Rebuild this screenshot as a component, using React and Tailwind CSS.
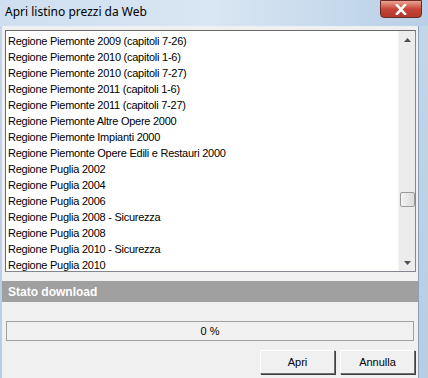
import React from 'react'

const items = [
  'Regione Piemonte 2009 (capitoli 7-26)',
  'Regione Piemonte 2010 (capitoli 1-6)',
  'Regione Piemonte 2010 (capitoli 7-27)',
  'Regione Piemonte 2011 (capitoli 1-6)',
  'Regione Piemonte 2011 (capitoli 7-27)',
  'Regione Piemonte Altre Opere 2000',
  'Regione Piemonte Impianti 2000',
  'Regione Piemonte Opere Edili e Restauri 2000',
  'Regione Puglia 2002',
  'Regione Puglia 2004',
  'Regione Puglia 2006',
  'Regione Puglia 2008 - Sicurezza',
  'Regione Puglia 2008',
  'Regione Puglia 2010 - Sicurezza',
  'Regione Puglia 2010',
]

export default function App() {
  return (
    <div
      className="w-[428px] h-[378px] overflow-hidden flex flex-col bg-gradient-to-b from-[#c4d6ea] to-[#b6cde4]"
      style={{ fontFamily: '"Liberation Sans", Arial, sans-serif' }}
    >
      {/* Title bar */}
      <div className="h-[26px] flex items-start justify-between shrink-0 bg-gradient-to-r from-[#cfdff0] via-[#d9e6f3] to-[#b8cfe6]">
        <span
          className="pl-[5px] pt-[5px] text-[12px] leading-[14px] text-black"
          style={{ fontFamily: '"Noto Sans", "Liberation Sans", sans-serif' }}
        >
          Apri listino prezzi da Web
        </span>
        <div className="mr-[6px] w-[42px] h-[18px] rounded-b-[4px] border border-[#6b2a24] bg-gradient-to-b from-[#e8a393] via-[#c7453a] to-[#b3382c] flex items-center justify-center">
          <svg width="12" height="11" viewBox="0 0 12 11">
            <path d="M2 1 L10 10 M10 1 L2 10" stroke="#ffffff" strokeWidth="2.6" strokeLinecap="square" />
          </svg>
        </div>
      </div>

      {/* Client area */}
      <div className="flex-1 ml-[2px] mr-[9px] bg-[#f0f0f0] border-r border-[#8aa1b8] flex flex-col">
        {/* List */}
        <div className="mt-[4px] ml-[3px] mr-[2px] h-[242px] bg-white border border-[#828790] border-t-[#696969] border-l-[#696969] flex">
          <div className="flex-1 pt-[2px] pl-[2px] text-[11px] tracking-[-0.25px] text-black">
            {items.map((t) => (
              <div key={t} className="h-[16px] leading-[16px] whitespace-nowrap">{t}</div>
            ))}
          </div>
          {/* Scrollbar */}
          <div className="w-[17px] bg-[#ececec] border-l border-[#f4f4f4] flex flex-col items-center">
            <div className="h-[17px] flex items-center justify-center">
              <svg width="7" height="4" viewBox="0 0 7 4"><path d="M3.5 0 L7 4 L0 4 Z" fill="#505050" /></svg>
            </div>
            <div className="h-[144px]" />
            <div className="w-[15px] h-[15px] rounded-[2px] border border-[#9a9a9a] bg-gradient-to-r from-[#f2f2f2] to-[#dcdcdc]" />
            <div className="flex-1" />
            <div className="h-[17px] flex items-center justify-center">
              <svg width="7" height="4" viewBox="0 0 7 4"><path d="M0 0 L7 0 L3.5 4 Z" fill="#505050" /></svg>
            </div>
          </div>
        </div>

        {/* Stato download */}
        <div className="mt-[9px] h-[21px] bg-[#a0a0a0] flex items-center pl-[6px]">
          <span className="text-[12px] font-bold text-white">Stato download</span>
        </div>

        {/* Progress */}
        <div className="mt-[19px] mx-[4px] h-[20px] border border-[#a0a0a0] bg-[#f0f0f0] flex items-center justify-center text-[11px] text-black">
          0 %
        </div>

        {/* Buttons */}
        <div className="mt-[9px] flex justify-end gap-[5px] pr-[3px]">
          <button className="w-[75px] h-[24px] border border-[#707070] border-t-white border-l-white shadow-[1px_1px_0_#404040] bg-[#f0f0f0] text-[11px] text-black">
            Apri
          </button>
          <button className="w-[75px] h-[24px] border border-[#707070] border-t-white border-l-white shadow-[1px_1px_0_#404040] bg-[#f0f0f0] text-[11px] text-black">
            Annulla
          </button>
        </div>
      </div>
    </div>
  )
}
